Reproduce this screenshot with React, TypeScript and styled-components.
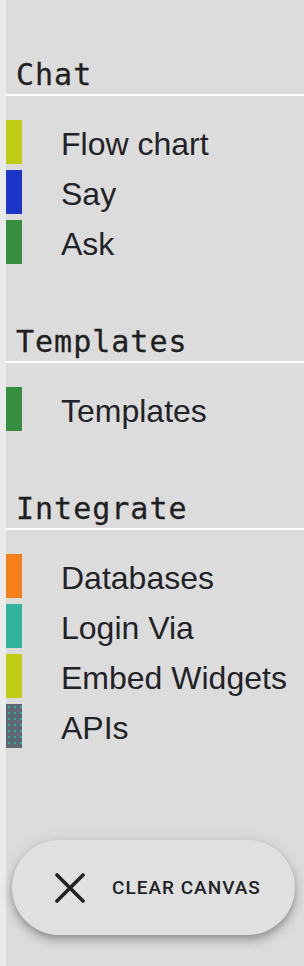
import styled, { createGlobalStyle } from "styled-components";

const GlobalStyle = createGlobalStyle`
  html, body {
    margin: 0;
    padding: 0;
    background: #ebebeb;
  }
  * {
    box-sizing: border-box;
  }
`;

const Panel = styled.aside`
  margin-left: 6px;
  min-height: 966px;
  background: #dcdcdc;
  display: flex;
  flex-direction: column;
  padding: 60px 0 31px;
`;

const Section = styled.section`
  & + & {
    margin-top: 63px;
  }
`;

const Heading = styled.h2`
  margin: 0;
  padding: 0 10px 4px;
  font-family: "DejaVu Sans Mono", "Liberation Mono", monospace;
  font-size: 30px;
  font-weight: 400;
  line-height: 30px;
  letter-spacing: 1px;
  color: #1f1f1f;
  -webkit-text-stroke: 0.3px #1f1f1f;
  border-bottom: 2px solid #ffffff;
`;

const List = styled.ul`
  list-style: none;
  margin: 0;
  padding: 24px 0 0;
  display: flex;
  flex-direction: column;
  gap: 6px;
`;

const Item = styled.li`
  height: 44px;
  display: flex;
  align-items: center;
  gap: 39px;
  cursor: grab;
`;

const Swatch = styled.span<{ $color: string; $dotted?: boolean }>`
  width: 16px;
  height: 44px;
  flex: none;
  background-color: ${(p) => p.$color};
  background-image: ${(p) =>
    p.$dotted
      ? "radial-gradient(circle, #2bb3a0 0.7px, transparent 1px)"
      : "none"};
  background-size: 6px 6px;
`;

const Label = styled.span`
  padding-top: 5px;
  font-family: "Liberation Sans", Arial, sans-serif;
  font-size: 32px;
  color: #1f2226;
  white-space: nowrap;
`;

const ClearButton = styled.button`
  margin: auto 0 0 6px;
  width: 283px;
  height: 95px;
  border: none;
  border-radius: 48px;
  background: #e0e0e0;
  box-shadow: 0 6px 10px rgba(0, 0, 0, 0.22), 0 2px 4px rgba(0, 0, 0, 0.12),
    0 1px 18px rgba(0, 0, 0, 0.08);
  display: flex;
  align-items: center;
  gap: 27px;
  padding: 0 0 0 43px;
  font-family: Roboto, "Liberation Sans", sans-serif;
  font-weight: 500;
  font-size: 19px;
  letter-spacing: 1px;
  text-transform: uppercase;
  color: #202225;
  cursor: pointer;
`;

const CloseIcon = () => (
  <svg width="30" height="30" viewBox="0 0 30 30" aria-hidden>
    <path
      d="M2 2 L28 28 M28 2 L2 28"
      stroke="#202225"
      strokeWidth="3.6"
      strokeLinecap="round"
      fill="none"
    />
  </svg>
);

type Block = { name: string; color: string; dotted?: boolean };

const sections: { title: string; blocks: Block[] }[] = [
  {
    title: "Chat",
    blocks: [
      { name: "Flow chart", color: "#c0cc16" },
      { name: "Say", color: "#1b35cb" },
      { name: "Ask", color: "#378e3e" },
    ],
  },
  {
    title: "Templates",
    blocks: [{ name: "Templates", color: "#378e3e" }],
  },
  {
    title: "Integrate",
    blocks: [
      { name: "Databases", color: "#f5801b" },
      { name: "Login Via", color: "#2fb39d" },
      { name: "Embed Widgets", color: "#c0cc16" },
      { name: "APIs", color: "#5f6872", dotted: true },
    ],
  },
];

export default function App() {
  return (
    <>
      <GlobalStyle />
      <Panel>
        {sections.map((s) => (
          <Section key={s.title}>
            <Heading>{s.title}</Heading>
            <List>
              {s.blocks.map((b) => (
                <Item key={b.name}>
                  <Swatch $color={b.color} $dotted={b.dotted} />
                  <Label>{b.name}</Label>
                </Item>
              ))}
            </List>
          </Section>
        ))}
        <ClearButton>
          <CloseIcon />
          Clear canvas
        </ClearButton>
      </Panel>
    </>
  );
}
